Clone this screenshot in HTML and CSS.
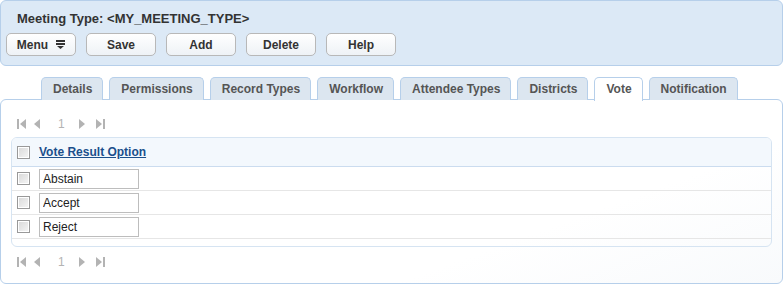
FILE: index.html
```html
<!DOCTYPE html>
<html lang="en">
<head>
    <meta charset="UTF-8">
    <title>Meeting Type</title>
    <link rel="stylesheet" href="styles.css">
</head>
<body>

    <!-- Header -->
    <div class="header">
        <h2>Meeting Type: &lt;MY_MEETING_TYPE&gt;</h2>
        <div class="toolbar">
            <button class="btn btn-menu">Menu
                <svg width="9" height="9" viewBox="0 0 9 9"><rect x="0" y="0" width="9" height="2" fill="#333"/><rect x="0" y="3" width="9" height="2" fill="#333"/><path d="M1 6 L8 6 L4.5 9 Z" fill="#333"/></svg>
            </button>
            <button class="btn">Save</button>
            <button class="btn">Add</button>
            <button class="btn">Delete</button>
            <button class="btn">Help</button>
        </div>
    </div>

    <!-- Tabs -->
    <ul class="tabs">
        <li>Details</li>
        <li>Permissions</li>
        <li>Record Types</li>
        <li>Workflow</li>
        <li>Attendee Types</li>
        <li>Districts</li>
        <li class="active">Vote</li>
        <li>Notification</li>
    </ul>

    <div class="panel">
        <div class="pager">
            <svg class="first" width="9" height="10" viewBox="0 0 9 10"><rect x="0" y="0" width="2" height="10" fill="#b3b3b3"/><path d="M9 0 L9 10 L3 5 Z" fill="#b3b3b3"/></svg>
            <svg class="prev" width="7" height="10" viewBox="0 0 7 10"><path d="M6 0 L6 10 L0 5 Z" fill="#b3b3b3"/></svg>
            <span class="page">1</span>
            <svg class="next" width="7" height="10" viewBox="0 0 7 10"><path d="M1 0 L1 10 L7 5 Z" fill="#b3b3b3"/></svg>
            <svg class="last" width="9" height="10" viewBox="0 0 9 10"><path d="M0 0 L0 10 L6 5 Z" fill="#b3b3b3"/><rect x="7" y="0" width="2" height="10" fill="#b3b3b3"/></svg>
        </div>

        <div class="grid">
            <div class="grid-head">
                <span class="box"></span>
                <a href="#">Vote Result Option</a>
            </div>
            <div class="row"><span class="box"></span><input type="text" value="Abstain"></div>
            <div class="row"><span class="box"></span><input type="text" value="Accept"></div>
            <div class="row"><span class="box"></span><input type="text" value="Reject"></div>
        </div>

        <div class="pager pager-bottom">
            <svg class="first" width="9" height="10" viewBox="0 0 9 10"><rect x="0" y="0" width="2" height="10" fill="#b3b3b3"/><path d="M9 0 L9 10 L3 5 Z" fill="#b3b3b3"/></svg>
            <svg class="prev" width="7" height="10" viewBox="0 0 7 10"><path d="M6 0 L6 10 L0 5 Z" fill="#b3b3b3"/></svg>
            <span class="page">1</span>
            <svg class="next" width="7" height="10" viewBox="0 0 7 10"><path d="M1 0 L1 10 L7 5 Z" fill="#b3b3b3"/></svg>
            <svg class="last" width="9" height="10" viewBox="0 0 9 10"><path d="M0 0 L0 10 L6 5 Z" fill="#b3b3b3"/><rect x="7" y="0" width="2" height="10" fill="#b3b3b3"/></svg>
        </div>
    </div>

</body>
</html>
```

FILE: styles.css
```css
body {
    margin: 0;
    width: 783px;
    font-family: "Liberation Sans", Arial, sans-serif;
    font-size: 12px;
    color: #333;
    background: #fff;
}
.header {
    height: 64px;
    background: #dce9f6;
    border: 1px solid #b6cfea;
    border-radius: 6px;
}
.header h2 {
    margin: 0;
    padding: 10px 0 0 16px;
    height: 22px;
    font-size: 13px;
    font-weight: bold;
    color: #333;
}
.toolbar {
    display: flex;
    gap: 10px;
    padding-left: 5px;
}
.btn {
    width: 70px;
    height: 23px;
    padding: 0;
    background: linear-gradient(#ffffff, #eef2f6);
    border: 1px solid #b8b8b8;
    border-radius: 5px;
    font-family: "Liberation Sans", Arial, sans-serif;
    font-size: 12px;
    font-weight: bold;
    color: #333;
}
.btn-menu {
    display: flex;
    align-items: center;
    justify-content: center;
    gap: 8px;
}
.tabs {
    display: flex;
    gap: 6px;
    list-style: none;
    margin: 11px 0 0 0;
    padding: 0 0 0 41px;
    position: relative;
    z-index: 1;
    height: 23px;
}
.tabs li {
    height: 22px;
    line-height: 23px;
    padding: 0 10px 0 11px;
    background: #dce6f0;
    border: 1px solid #b6cfea;
    border-bottom: none;
    border-radius: 5px 5px 0 0;
    font-weight: bold;
    color: #555;
}
.tabs li.active {
    height: 23px;
    background: #fff;
}
.panel {
    height: 183px;
    margin-top: -1px;
    border: 1px solid #b6cfea;
    border-radius: 6px;
    background: linear-gradient(160deg, #ffffff 70%, #f8fafc);
}
.pager {
    display: flex;
    align-items: center;
    height: 14px;
    padding: 17px 0 0 16px;
    color: #b3b3b3;
    font-size: 12px;
}
.pager .prev {
    margin-left: 8px;
}
.pager .page {
    margin-left: 17px;
}
.pager .next {
    margin-left: 13px;
}
.pager .last {
    margin-left: 11px;
}
.pager-bottom {
    padding-top: 8px;
}
.grid {
    margin: 6px 10px 0 10px;
    height: 108px;
    border: 1px solid #d6e4f2;
    border-radius: 6px;
    overflow: hidden;
}
.grid-head {
    display: flex;
    align-items: center;
    gap: 9px;
    height: 28px;
    padding-left: 5px;
    background: #f3f8fd;
    border-bottom: 1px solid #cbdcef;
}
.grid-head a {
    font-weight: bold;
    color: #1b4f8c;
    text-decoration: underline;
}
.row {
    display: flex;
    align-items: center;
    gap: 9px;
    height: 23px;
    padding-left: 5px;
    border-bottom: 1px solid #e6e6e6;
}
.box {
    width: 11px;
    height: 11px;
    border: 1px solid #999;
    background: linear-gradient(135deg, #d8d8d8, #f6f6f6);
    box-shadow: inset 0 0 0 1px #fff;
}
.row input {
    width: 92px;
    height: 14px;
    padding: 2px 3px;
    border: 1px solid #bdbdbd;
    font-family: "Liberation Sans", Arial, sans-serif;
    font-size: 12px;
    color: #222;
}
```
